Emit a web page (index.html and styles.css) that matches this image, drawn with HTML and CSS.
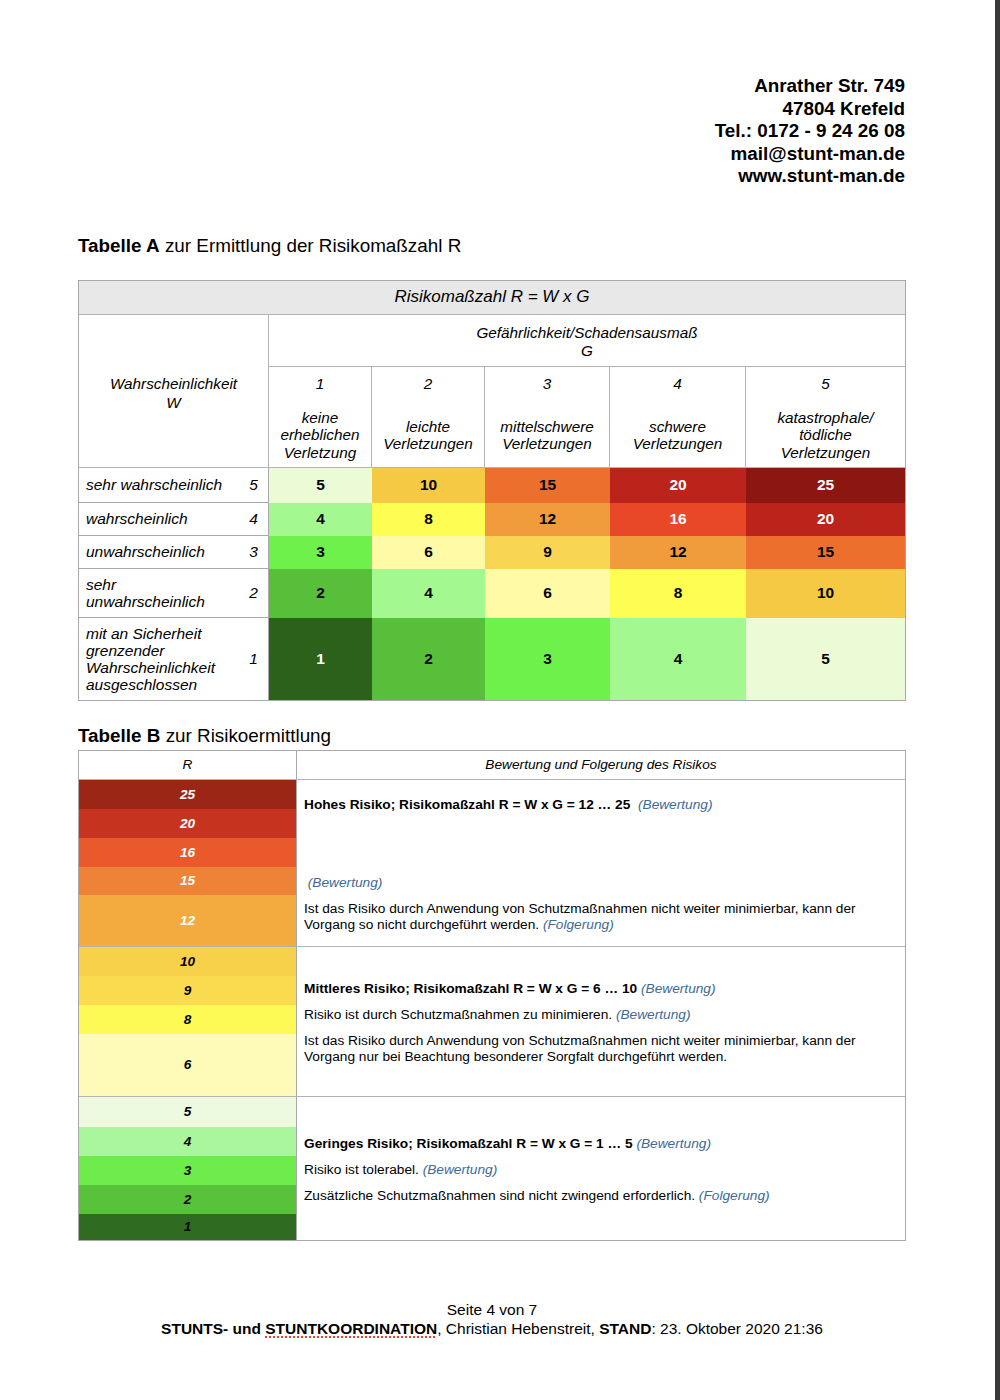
FILE: index.html
```html
<!DOCTYPE html>
<html lang="de">
<head>
<meta charset="utf-8">
<title>Risikomaßzahl</title>
<link rel="stylesheet" href="styles.css">
</head>
<body>
<div class="page">
  <div class="content">
    <address class="addr">Anrather Str. 749<br>47804 Krefeld<br>Tel.: 0172 - 9 24 26 08<br>mail@stunt-man.de<br>www.stunt-man.de</address>

    <h2 class="title title-a"><b>Tabelle A</b> zur Ermittlung der Risikomaßzahl R</h2>
    <div class="ta">
      <div class="ta-head">Risikomaßzahl R = W x G</div>
      <div class="ta-w">Wahrscheinlichkeit<br>W</div>
      <div class="ta-g">Gefährlichkeit/Schadensausmaß<br>G</div>
      <div class="ta-col"><span class="ta-n">1</span><span class="ta-d">keine<br>erheblichen<br>Verletzung</span></div>
      <div class="ta-col"><span class="ta-n">2</span><span class="ta-d">leichte<br>Verletzungen</span></div>
      <div class="ta-col"><span class="ta-n">3</span><span class="ta-d">mittelschwere<br>Verletzungen</span></div>
      <div class="ta-col"><span class="ta-n">4</span><span class="ta-d">schwere<br>Verletzungen</span></div>
      <div class="ta-col last"><span class="ta-n">5</span><span class="ta-d">katastrophale/<br>tödliche<br>Verletzungen</span></div>

      <div class="ta-lab">sehr wahrscheinlich</div><div class="ta-num">5</div>
      <div class="c c5">5</div><div class="c c10">10</div><div class="c c15">15</div><div class="c c20 w">20</div><div class="c c25 w">25</div>

      <div class="ta-lab">wahrscheinlich</div><div class="ta-num">4</div>
      <div class="c c4">4</div><div class="c c8">8</div><div class="c c12">12</div><div class="c c16 w">16</div><div class="c c20 w">20</div>

      <div class="ta-lab">unwahrscheinlich</div><div class="ta-num">3</div>
      <div class="c c3">3</div><div class="c c6">6</div><div class="c c9">9</div><div class="c c12">12</div><div class="c c15">15</div>

      <div class="ta-lab">sehr<br>unwahrscheinlich</div><div class="ta-num">2</div>
      <div class="c c2">2</div><div class="c c4">4</div><div class="c c6">6</div><div class="c c8">8</div><div class="c c10">10</div>

      <div class="ta-lab last">mit an Sicherheit<br>grenzender<br>Wahrscheinlichkeit<br>ausgeschlossen</div><div class="ta-num last">1</div>
      <div class="c c1 w">1</div><div class="c c2">2</div><div class="c c3">3</div><div class="c c4">4</div><div class="c c5">5</div>
    </div>

    <h2 class="title title-b"><b>Tabelle B</b> zur Risikoermittlung</h2>
    <div class="tb">
      <div class="tb-hl">R</div>
      <div class="tb-hr">Bewertung und Folgerung des Risikos</div>

      <div class="tb-stripes sep">
        <div class="s s-25 w">25</div>
        <div class="s s-20 w">20</div>
        <div class="s s-16 w">16</div>
        <div class="s s-15 w h28">15</div>
        <div class="s s-12 w grow">12</div>
      </div>
      <div class="tb-text sep sec1">
        <p><b>Hohes Risiko; Risikomaßzahl R = W x G = 12 … 25</b> &nbsp;<span class="bl">(Bewertung)</span></p>
        <p>&nbsp;</p>
        <p>&nbsp;</p>
        <p>&nbsp;<span class="bl">(Bewertung)</span></p>
        <p>Ist das Risiko durch Anwendung von Schutzmaßnahmen nicht weiter minimierbar, kann der Vorgang so nicht durchgeführt werden. <span class="bl">(Folgerung)</span></p>
      </div>

      <div class="tb-stripes sep">
        <div class="s s-10">10</div>
        <div class="s s-9">9</div>
        <div class="s s-8">8</div>
        <div class="s s-6 grow">6</div>
      </div>
      <div class="tb-text sep sec2">
        <p><b>Mittleres Risiko; Risikomaßzahl R = W x G = 6 … 10</b> <span class="bl">(Bewertung)</span></p>
        <p>Risiko ist durch Schutzmaßnahmen zu minimieren. <span class="bl">(Bewertung)</span></p>
        <p>Ist das Risiko durch Anwendung von Schutzmaßnahmen nicht weiter minimierbar, kann der Vorgang nur bei Beachtung besonderer Sorgfalt durchgeführt werden.</p>
      </div>

      <div class="tb-stripes">
        <div class="s s-5 h30">5</div>
        <div class="s s-4">4</div>
        <div class="s s-3">3</div>
        <div class="s s-2">2</div>
        <div class="s s-1 grow">1</div>
      </div>
      <div class="tb-text sec3">
        <p><b>Geringes Risiko; Risikomaßzahl R = W x G = 1 … 5</b> <span class="bl">(Bewertung)</span></p>
        <p>Risiko ist tolerabel. <span class="bl">(Bewertung)</span></p>
        <p>Zusätzliche Schutzmaßnahmen sind nicht zwingend erforderlich. <span class="bl">(Folgerung)</span></p>
      </div>
    </div>

    <footer class="foot">
      <div>Seite 4 von 7</div>
      <div><b>STUNTS- und <span class="spell">STUNTKOORDINATION</span></b>, Christian Hebenstreit, <b>STAND</b>: 23. Oktober 2020 21:36</div>
    </footer>
  </div>
</div>
</body>
</html>
```

FILE: styles.css
```css
* { box-sizing: border-box; }
html, body { margin: 0; padding: 0; }
body {
  background: #383838;
  font-family: "Liberation Sans", Arial, Helvetica, sans-serif;
  color: #000;
}
.page {
  width: 995px;
  min-height: 1400px;
  background: #fff;
  padding: 75px 0 0 78px;
}
.content { width: 828px; }

.addr {
  font-style: normal;
  font-weight: bold;
  font-size: 18.85px;
  line-height: 22.5px;
  text-align: right;
  padding-right: 1px;
}

.title {
  margin: 0;
  font-size: 18.85px;
  font-weight: normal;
  line-height: 22px;
}
.title-a { margin-top: 47px; }
.title-b { margin-top: 24px; }

/* ---------- Table A ---------- */
.ta {
  margin-top: 23px;
  display: grid;
  grid-template-columns: 160px 30px 103px 113px 125px 136px 159px;
  grid-template-rows: 34px 52px 101px 35px 33px 33px 49px 82px;
  border: 1px solid #a9a9a9;
  font-style: italic;
  font-size: 15.3px;
}
.ta > div { display: flex; align-items: center; justify-content: center; text-align: center; }
.ta-head {
  grid-column: 1 / -1;
  background: #e8e8e8;
  border-bottom: 1px solid #b4b4b4;
  font-size: 17px;
}
.ta-w {
  grid-column: 1 / span 2;
  grid-row: 2 / span 2;
  border-right: 1px solid #b4b4b4;
  border-bottom: 1px solid #b4b4b4;
  line-height: 19px;
  padding-top: 4px;
}
.ta-g {
  grid-column: 3 / span 5;
  border-bottom: 1px solid #b4b4b4;
  line-height: 18px;
  padding-top: 4px;
}
.ta .ta-col {
  flex-direction: column;
  justify-content: flex-start;
  border-right: 1px solid #b4b4b4;
  border-bottom: 1px solid #b4b4b4;
}
.ta .ta-col.last { border-right: none; }
.ta-n { height: 33px; line-height: 33px; display: block; }
.ta-d { flex: 1; display: flex; align-items: center; justify-content: center; line-height: 17.5px; padding-top: 4px; }

.ta .ta-lab {
  justify-content: flex-start;
  text-align: left;
  padding-left: 7px;
  line-height: 17px;
  font-size: 15.5px;
  border-bottom: 1px solid #a9a9a9;
}
.ta .ta-num {
  border-right: 1px solid #a9a9a9;
  border-bottom: 1px solid #a9a9a9;
  font-size: 15.5px;
}
.ta .ta-lab.last, .ta .ta-num.last { border-bottom: none; }

.ta .c { font-style: normal; font-weight: bold; font-size: 15.5px; }
.w { color: #fff; }
.c1 { background: #2b611b; }
.c2 { background: #58bf3a; }
.c3 { background: #6ef14a; }
.c4 { background: #a3f98f; }
.c5 { background: #ebfbd5; }
.c6 { background: #fefaa6; }
.c8 { background: #fefd52; }
.c9 { background: #f8d654; }
.c10 { background: #f6c944; }
.c12 { background: #f19c3c; }
.c15 { background: #ec6f2e; }
.c16 { background: #e84827; }
.c20 { background: #bb241b; }
.c25 { background: #8b1710; }

/* ---------- Table B ---------- */
.tb {
  margin-top: 3px;
  display: grid;
  grid-template-columns: 218px 608px;
  grid-template-rows: 29px 167px 150px 143px;
  border: 1px solid #a9a9a9;
  font-size: 13.7px;
}
.tb-hl, .tb-hr {
  display: flex;
  align-items: center;
  justify-content: center;
  font-style: italic;
  border-bottom: 1px solid #b4b4b4;
}
.tb-hl { border-right: 1px solid #a9a9a9; }
.tb-stripes {
  display: flex;
  flex-direction: column;
  border-right: 1px solid #a9a9a9;
}
.tb-stripes.sep, .tb-text.sep { border-bottom: 1px solid #b4b4b4; }
.s {
  height: 29px;
  flex: none;
  display: flex;
  align-items: center;
  justify-content: center;
  font-weight: bold;
  font-style: italic;
  font-size: 13.6px;
}
.s.h28 { height: 28px; }
.s.h30 { height: 30px; }
.s.grow { flex: 1; height: auto; }
.s-25 { background: #9b2616; }
.s-20 { background: #c6341f; }
.s-16 { background: #ea592b; }
.s-15 { background: #ee8236; }
.s-12 { background: #f3ab3f; }
.s-10 { background: #f8d14a; }
.s-9 { background: #fadb4f; }
.s-8 { background: #fdf955; }
.s-6 { background: #fefbb9; }
.s-5 { background: #eefae0; }
.s-4 { background: #a9f69c; }
.s-3 { background: #6eec4b; }
.s-2 { background: #58c23b; }
.s-1 { background: #2f6c22; }

.tb-text {
  display: flex;
  flex-direction: column;
  justify-content: center;
  padding: 0 7px;
}
.tb-text.sec1 { padding-top: 4px; }
.tb-text.sec2 { padding-top: 4px; }
.tb-text.sec3 { padding-top: 4px; }
.tb-text p { margin: 0 0 10px; line-height: 16px; }
.tb-text p:last-child { margin-bottom: 0; }
.bl { color: #3d6a96; font-style: italic; }

/* ---------- Footer ---------- */
.foot {
  margin-top: 59px;
  text-align: center;
  font-size: 15.5px;
  line-height: 19px;
}
.spell {
  text-decoration: underline dotted #e0403a;
  text-decoration-thickness: 2px;
  text-underline-offset: 3px;
}
```
